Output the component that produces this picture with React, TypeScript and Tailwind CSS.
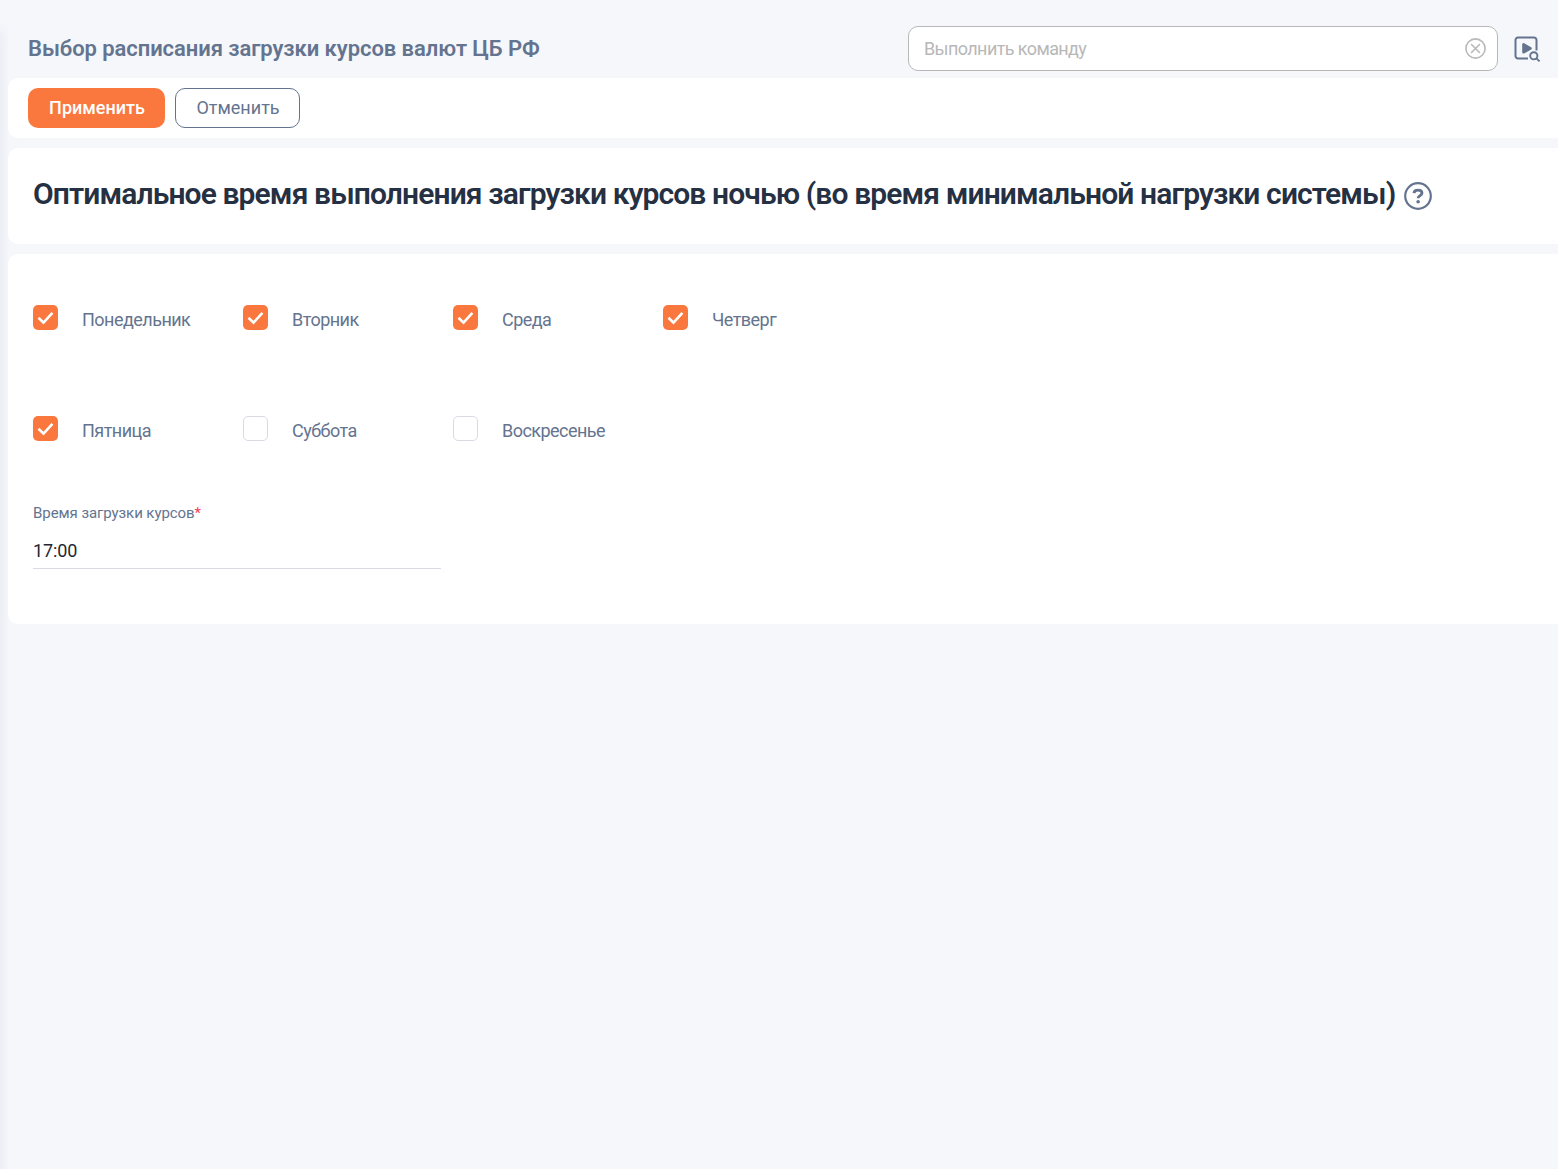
import { useState } from "react";

const DAYS = [
  { id: "mon", label: "Понедельник", checked: true },
  { id: "tue", label: "Вторник", checked: true },
  { id: "wed", label: "Среда", checked: true },
  { id: "thu", label: "Четверг", checked: true },
  { id: "fri", label: "Пятница", checked: true },
  { id: "sat", label: "Суббота", checked: false },
  { id: "sun", label: "Воскресенье", checked: false },
];

function ClearIcon() {
  return (
    <svg width="22" height="22" viewBox="0 0 22 22" fill="none" stroke="#b8b8b8" strokeWidth="1.6" strokeLinecap="round">
      <circle cx="11.5" cy="10.5" r="9.6" />
      <path d="M7.5 6.5l8 8M15.5 6.5l-8 8" />
    </svg>
  );
}

function RunSearchIcon() {
  return (
    <svg width="28" height="28" viewBox="0 0 28 28" fill="none" stroke="#64748f" strokeWidth="2">
      <path d="M15 23.5H5A2.5 2.5 0 0 1 2.5 21V5A2.5 2.5 0 0 1 5 2.5h16A2.5 2.5 0 0 1 23.5 5v10.5" />
      <path d="M10.500 9.300v8l7-4z" fill="#64748f" strokeLinejoin="round" strokeWidth="2.6" />
      <circle cx="20.800" cy="20.800" r="3.600" strokeWidth="1.9" />
      <path d="M23.400 23.400l3.200 3" strokeWidth="1.9" />
    </svg>
  );
}

function HelpIcon() {
  return (
    <svg width="28" height="28" viewBox="0 0 28 28" fill="none" stroke="#64748f" strokeWidth="2.2">
      <circle cx="14" cy="14" r="12.8" />
      <path d="M10 11.100c.1-2 1.800-3 4-3s4 1 4 3c0 2.500-3.900 2.500-3.900 5.200" strokeWidth="2.8" />
      <circle cx="14.100" cy="19.800" r="1.800" fill="#64748f" stroke="none" />
    </svg>
  );
}

interface DayCheckboxProps {
  label: string;
  checked: boolean;
  onToggle: () => void;
}

function DayCheckbox({ label, checked, onToggle }: DayCheckboxProps) {
  return (
    <button role="checkbox" aria-checked={checked} onClick={onToggle} className="flex h-[25px] items-center gap-6 text-left">
      <span
        className={`flex size-[25px] shrink-0 items-center justify-center rounded-[5px] ${
          checked ? "bg-[#fa783d]" : "border border-[#d9dbe4] bg-white"
        }`}
      >
        {checked && (
          <svg width="25" height="25" viewBox="0 0 25 25" fill="none" stroke="white" strokeWidth="2.6">
            <path d="M5.500 12.700l5 4.900 8.900-9.700" />
          </svg>
        )}
      </span>
      <span className="pt-1 text-[18px] leading-[25px] tracking-[-0.53px] text-[#64748f]">{label}</span>
    </button>
  );
}

export default function App() {
  const [days, setDays] = useState(DAYS);
  const [command, setCommand] = useState("");
  const [time, setTime] = useState("17:00");

  const toggle = (id: string) => setDays(days.map((d) => (d.id === id ? { ...d, checked: !d.checked } : d)));

  return (
    <div className="flex h-[1169px] overflow-hidden bg-[#f5f7fb] font-[Roboto,sans-serif]">
      {/* soft shadow cast by the navigation rail */}
      <div className="w-2 shrink-0 overflow-hidden">
        <div className="-ml-2 mt-8 h-full w-2 shadow-[0_0_12px_2px_rgba(100,100,130,0.09)]" />
      </div>

      <div className="min-w-0 flex-1">
        <header className="flex h-[78px] items-start justify-between pl-5 pr-[17px] pt-[26px]">
          <h1 className="whitespace-nowrap text-[22px] font-semibold leading-[45px] tracking-[-0.07px] text-[#64748f]">
            Выбор расписания загрузки курсов валют ЦБ РФ
          </h1>
          <div className="flex items-center gap-[15px]">
            <div className="flex h-[45px] w-[590px] items-center rounded-[10px] border border-[#b8b8b8] bg-white pl-[15px] pr-[11px]">
              <input
                value={command}
                onChange={(e) => setCommand(e.target.value)}
                placeholder="Выполнить команду"
                className="min-w-0 flex-1 text-[18px] tracking-[-0.6px] outline-none placeholder:text-[#b8b8b8]"
              />
              <ClearIcon />
            </div>
            <RunSearchIcon />
          </div>
        </header>

        <div className="flex h-[60px] items-center gap-2.5 rounded-l-[10px] bg-white pl-5">
          <button className="h-10 w-[137px] rounded-[10px] bg-[#fa783d] pb-0.5 pl-px text-[18px] font-medium text-white">
            Применить
          </button>
          <button className="h-10 w-[125px] rounded-[10px] border border-[#64748f] pb-0.5 pl-px text-[18px] text-[#64748f]">
            Отменить
          </button>
        </div>

        <section className="mt-2.5 flex h-24 items-start gap-[9px] rounded-l-[10px] bg-white pl-[25px] pt-[26px]">
          <h2 className="whitespace-nowrap text-[30px] font-semibold leading-10 tracking-[-0.88px] text-[#263043]">
            Оптимальное время выполнения загрузки курсов ночью (во время минимальной нагрузки системы)
          </h2>
          <div className="shrink-0 pt-2">
            <HelpIcon />
          </div>
        </section>

        <section className="mt-2.5 h-[370px] rounded-l-[10px] bg-white pl-[25px] pt-[51px]">
          <div className="grid grid-cols-[repeat(4,210px)] gap-y-[86px]">
            {days.map((d) => (
              <DayCheckbox key={d.id} label={d.label} checked={d.checked} onToggle={() => toggle(d.id)} />
            ))}
          </div>

          <label className="mt-[62px] block w-[408px]">
            <span className="block text-[15px] leading-5 tracking-[-0.07px] text-[#64748f]">
              Время загрузки курсов<span className="text-[#ff3b4e]">*</span>
            </span>
            <input
              value={time}
              onChange={(e) => setTime(e.target.value)}
              className="mt-2.5 block h-9 w-full border-b border-[#d9dbe4] text-[18px] tracking-[-0.1px] text-[#1f2633] outline-none"
            />
          </label>
        </section>
      </div>
    </div>
  );
}
